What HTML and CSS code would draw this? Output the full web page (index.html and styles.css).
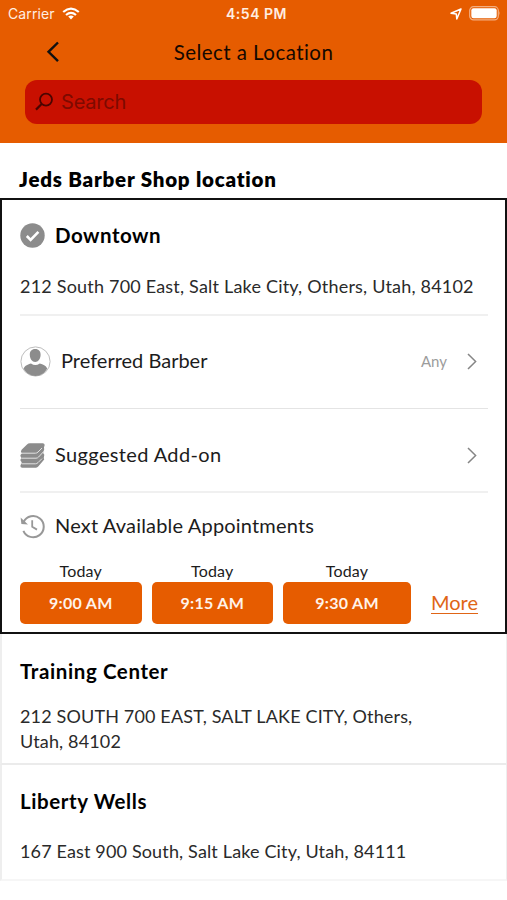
FILE: index.html
```html
<!DOCTYPE html>
<html lang="en">
<head>
    <meta charset="UTF-8">
    <meta name="viewport" content="width=device-width, initial-scale=1.0">
    <title>Select a Location</title>
    <link rel="stylesheet" href="styles.css">
</head>
<body>
    <header class="header">
        <div class="status-bar">
            <div class="carrier">
                <span>Carrier</span>
                <svg width="18" height="13" viewBox="0 0 18 13" fill="none" stroke="#fff" stroke-width="2.2">
                    <path d="M1.2 5 Q9 -1.8 16.8 5"/>
                    <path d="M4 8 Q9 3.8 14 8"/>
                    <path d="M9 12.4 L6.2 9.6 Q9 7.6 11.8 9.6 Z" fill="#fff" stroke="none"/>
                </svg>
            </div>
            <span class="clock">4:54 PM</span>
            <div class="battery">
                <svg width="12" height="12" viewBox="0 0 12 12" fill="none" stroke="#fff" stroke-width="1.5" stroke-linejoin="round">
                    <path d="M11 1 L1 5.2 L6.3 5.9 L6.8 11 Z"/>
                </svg>
                <svg width="32" height="15" viewBox="0 0 32 15">
                    <rect x="0.7" y="0.7" width="28.6" height="13.2" rx="3.8" fill="none" stroke="#f3ae80" stroke-width="1.2"/>
                    <rect x="2.3" y="2.3" width="25.4" height="10" rx="2.2" fill="#fff"/>
                    <path d="M30.3 5 Q31.8 7.3 30.3 9.6 Z" fill="#f3ae80"/>
                </svg>
            </div>
        </div>
        <div class="nav">
            <svg class="back" width="14" height="22" viewBox="0 0 14 22" fill="none" stroke="#111" stroke-width="2.4">
                <path d="M12 1.5 L2.5 10.8 L12 20.2"/>
            </svg>
            <h1>Select a Location</h1>
        </div>
        <div class="search">
            <svg width="19" height="19" viewBox="0 0 19 19" fill="none" stroke="#4a0500" stroke-width="1.8">
                <circle cx="11" cy="7.6" r="6"/>
                <path d="M6.6 12 L1 17.6" stroke-width="2.2"/>
            </svg>
            <span>Search</span>
        </div>
    </header>

    <h2 class="shop-name">Jeds Barber Shop location</h2>

    <section class="card">
        <div class="place">
            <div class="row-title">
                <svg width="25" height="25" viewBox="0 0 25 25">
                    <circle cx="12.5" cy="12.5" r="12.2" fill="#8c8c8c"/>
                    <path d="M6.8 13 L10.6 16.8 L18.4 8.8" fill="none" stroke="#fff" stroke-width="2.6"/>
                </svg>
                <h3>Downtown</h3>
            </div>
            <p class="address address-main">212 South 700 East, Salt Lake City, Others, Utah, 84102</p>
        </div>

        <div class="row barber">
            <svg width="31" height="31" viewBox="0 0 31 31">
                <circle cx="15.5" cy="15.5" r="14.6" fill="#fff" stroke="#bdbdbd" stroke-width="1"/>
                <path d="M15.2 3 C18.8 3 20.8 5.4 20.6 9 C20.4 13 18.2 16 15.2 16 C12.2 16 10 13 9.8 9 C9.6 5.4 11.6 3 15.2 3 Z" fill="#8c8c8c"/>
                <path d="M3.6 22.6 C5 19.4 8 18.6 11 17.6 Q15.3 20.6 19.8 17.6 C23 18.6 26 19.6 27.2 22.6 C24.6 27.4 20.6 30 15.5 30 C10.4 30 6.2 27.4 3.6 22.6 Z" fill="#8c8c8c"/>
            </svg>
            <span class="label barber-label">Preferred Barber</span>
            <span class="any">Any</span>
            <svg class="chevron" width="10" height="17" viewBox="0 0 10 17"><path d="M1 1 L8.6 8.5 L1 16"/></svg>
        </div>

        <div class="row addon">
            <svg width="25" height="25" viewBox="0 0 25 25">
                <path d="M7 1.4 Q8 0.2 10 0.2 H23 Q25 0.4 24.6 2.6 Q23.6 4.4 24.2 6.4 Q23 8.6 23.4 10.6 Q25 11.6 24 13.4 Q23.4 14.8 24.2 16.4 L18.2 23.6 Q17.4 24.7 16 24.7 H2.2 Q0.4 24.5 0.4 23 Q0.4 21.6 1.6 20.8 L1.6 19 Q0.4 18.2 0.4 17 Q0.4 15.8 2 15 H1.6 Q0.4 13.8 0.4 12.4 Q0.4 11.2 2 10.4 Q0 8.6 1.6 6.8 Z" fill="#8c8c8c"/>
                <path d="M2 10.2 H15.4 Q17 10.2 18 9 L22 5 M2 15.2 H16 Q17.6 15.2 18.6 14 L23.6 8.6 M2 20.8 H15.4 Q17 20.8 18 19.6 L22 15.6" fill="none" stroke="#e2e2e2" stroke-width="1"/>
            </svg>
            <span class="label addon-label">Suggested Add-on</span>
            <svg class="chevron" width="10" height="17" viewBox="0 0 10 17"><path d="M1 1 L8.6 8.5 L1 16"/></svg>
        </div>

        <div class="next">
            <div class="row-title">
                <svg width="25" height="25" viewBox="0 0 25 25" fill="none" stroke="#989898" stroke-width="2">
                    <path d="M3.6 8 A10.6 10.6 0 1 1 3.4 16.8"/>
                    <path d="M0.6 3.4 L1.4 10 L8 10.6 Z" fill="#989898" stroke="none"/>
                    <path d="M12.2 6.2 V12.8 L17 15.6" stroke-width="1.8"/>
                </svg>
                <span class="label next-label">Next Available Appointments</span>
            </div>
            <div class="slots">
                <div class="slot">
                    <span class="day">Today</span>
                    <button>9:00 AM</button>
                </div>
                <div class="slot">
                    <span class="day">Today</span>
                    <button>9:15 AM</button>
                </div>
                <div class="slot slot-wide">
                    <span class="day">Today</span>
                    <button>9:30 AM</button>
                </div>
                <a class="more" href="#">More</a>
            </div>
        </div>
    </section>

    <section class="location training">
        <h3>Training Center</h3>
        <p class="address address-training">212 SOUTH 700 EAST, SALT LAKE CITY, Others,<br>Utah, 84102</p>
    </section>
    <section class="location liberty">
        <h3>Liberty Wells</h3>
        <p class="address address-liberty">167 East 900 South, Salt Lake City, Utah, 84111</p>
    </section>
</body>
</html>
```
FILE: styles.css
```css
* {
    box-sizing: border-box;
}
body {
    margin: 0;
    background-color: #fff;
    font-family: Lato, "Liberation Sans", sans-serif;
    font-variant-ligatures: none;
    color: #1c1c1c;
}
h1, h2, h3, p {
    margin: 0;
    white-space: nowrap;
}
svg {
    display: block;
    flex-shrink: 0;
}
.header {
    height: 143px;
    background-color: #e65c00;
}
.status-bar {
    display: grid;
    grid-template-columns: 1fr auto 1fr;
    align-items: center;
    height: 27px;
    padding: 0 6px 0 8px;
    font-family: Inter, sans-serif;
    font-size: 14px;
    color: #ffeee2;
}
.carrier {
    display: flex;
    align-items: center;
    gap: 7px;
    letter-spacing: 0.1px;
}
.clock {
    padding-left: 4px;
    font-weight: 600;
    letter-spacing: 0.5px;
}
.battery {
    display: flex;
    align-items: center;
    justify-content: flex-end;
    gap: 7px;
}
.nav {
    display: grid;
    grid-template-columns: 1fr auto 1fr;
    align-items: center;
    height: 49px;
}
.back {
    margin-left: 46px;
}
h1 {
    padding-top: 1px;
    font-size: 20.5px;
    font-weight: 400;
    letter-spacing: 0.45px;
    color: #150800;
}
.search {
    display: flex;
    align-items: center;
    gap: 7px;
    height: 44px;
    margin: 4px 25px 0;
    padding: 0 0 1px 10px;
    border-radius: 12px;
    background-color: #c81000;
    font-family: Inter, sans-serif;
    font-size: 20px;
    letter-spacing: -0.2px;
    color: #7d0a00;
}
.shop-name {
    height: 55px;
    padding-left: 19px;
    font-size: 20.5px;
    font-weight: 800;
    line-height: 73px;
    letter-spacing: 0.78px;
    color: #000;
}
h3 {
    font-size: 20.5px;
    font-weight: 700;
    letter-spacing: 0.6px;
    color: #000;
}
.card {
    height: 436px;
    padding: 0 17px 0 18px;
    border: 2px solid #111;
}
.row-title {
    display: flex;
    align-items: center;
    gap: 10px;
    height: 25px;
}
.row-title h3 {
    padding-bottom: 1px;
    letter-spacing: 0.5px;
}
.place {
    height: 116px;
    padding-top: 23px;
    border-bottom: 2px solid #f0f0f0;
}
.address {
    font-size: 18px;
    line-height: 25px;
    letter-spacing: 0.15px;
    color: #2a2a2a;
}
.address-main {
    margin-top: 26px;
    letter-spacing: 0.2px;
}
.label {
    padding-bottom: 3px;
    font-size: 20px;
    white-space: nowrap;
}
.row {
    display: flex;
    align-items: center;
    padding-right: 11px;
}
.barber {
    height: 93px;
    padding-bottom: 2px;
    border-bottom: 1px solid #e4e4e4;
}
.barber-label {
    margin-left: 10px;
}
.any {
    margin: 0 20px 0 auto;
    font-size: 15px;
    color: #9c9c9c;
}
.chevron {
    fill: none;
    stroke: #858585;
    stroke-width: 1.5;
}
.addon {
    height: 84px;
    padding-top: 10px;
    border-bottom: 2px solid #f0f0f0;
}
.addon-label {
    margin-left: 10px;
    margin-right: auto;
    letter-spacing: 0.37px;
}
.next {
    padding-top: 21px;
}
.next-label {
    letter-spacing: 0.18px;
}
.slots {
    display: flex;
    align-items: flex-end;
    gap: 10px;
    margin-top: 22px;
}
.slot {
    width: 121.5px;
    text-align: center;
}
.slot-wide {
    width: 128px;
}
.day {
    display: block;
    padding-bottom: 1px;
    font-size: 16px;
    line-height: 20px;
    letter-spacing: 0.2px;
}
button {
    display: block;
    width: 100%;
    height: 42px;
    padding: 0 0 2px;
    border: none;
    border-radius: 5px;
    background-color: #e65c00;
    font-family: inherit;
    font-size: 16px;
    font-weight: 700;
    letter-spacing: 0.3px;
    color: #fff3ea;
}
.more {
    margin-left: 10px;
    padding-bottom: 1px;
    font-size: 20px;
    line-height: 42px;
    color: #e06516;
    text-decoration-thickness: 1px;
    text-underline-offset: 3px;
}
.location {
    padding-left: 18px;
    border-left: 2px solid #eee;
    border-right: 1px solid #eee;
    border-bottom: 2px solid #ebebeb;
}
.training {
    height: 131px;
    padding-top: 25px;
}
.address-training {
    margin-top: 21px;
}
.liberty {
    height: 116px;
    padding-top: 24px;
    border-bottom-color: #f6f6f6;
}
.address-liberty {
    margin-top: 26px;
}
```
